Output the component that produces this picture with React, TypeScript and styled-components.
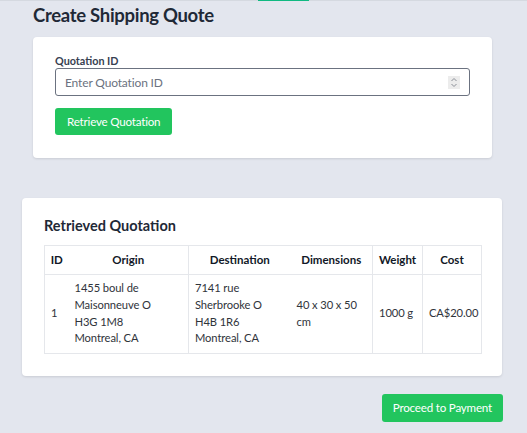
import React from "react";
import { createGlobalStyle, styled } from "styled-components";

const GlobalStyle = createGlobalStyle`
  body {
    margin: 0;
    background: #e3e6ee;
    font-family: Lato, "Liberation Sans", Arial, sans-serif;
    color: #1f2937;
  }
`;

type Quote = {
  id: number;
  origin: string[];
  destination: string[];
  dimensions: string;
  weight: string;
  cost: string;
};

const quote: Quote = {
  id: 1,
  origin: ["1455 boul de", "Maisonneuve O", "H3G 1M8", "Montreal, CA"],
  destination: ["7141 rue", "Sherbrooke O", "H4B 1R6", "Montreal, CA"],
  dimensions: "40 x 30 x 50 cm",
  weight: "1000 g",
  cost: "CA$20.00",
};

const columns = [
  { label: "ID", width: 24, divider: false },
  { label: "Origin", width: 120, divider: false },
  { label: "Destination", width: 102, divider: true },
  { label: "Dimensions", width: 82, divider: false },
  { label: "Weight", width: 50, divider: true },
  { label: "Cost", width: 59, divider: true },
];

export default function App() {
  return (
    <>
      <GlobalStyle />
      <TopStrip>
        <TopAccent />
      </TopStrip>
      <Page>
        <UpperSection>
          <Title>Create Shipping Quote</Title>
          <Card $padding="16px 22px 23px">
            <Label htmlFor="quotation-id">Quotation ID</Label>
            <InputWrapper>
              <Input id="quotation-id" type="text" placeholder="Enter Quotation ID" />
              <Spinner>
                <svg width="8" height="11" viewBox="0 0 8 11" fill="none">
                  <path d="M1.5 4L4 1.5L6.5 4" stroke="#8b8f97" strokeWidth="1" />
                  <path d="M1.5 7L4 9.5L6.5 7" stroke="#8b8f97" strokeWidth="1" />
                </svg>
              </Spinner>
            </InputWrapper>
            <GreenButton>Retrieve Quotation</GreenButton>
          </Card>
        </UpperSection>

        <Card $padding="18px 22px 22px" $wide>
          <SubTitle>Retrieved Quotation</SubTitle>
          <Table>
            <colgroup>
              {columns.map((c) => (
                <col key={c.label} style={{ width: c.width }} />
              ))}
            </colgroup>
            <thead>
              <tr>
                {columns.map((c) => (
                  <Th key={c.label} $divider={c.divider}>
                    {c.label}
                  </Th>
                ))}
              </tr>
            </thead>
            <tbody>
              <tr>
                <Td>{quote.id}</Td>
                <Td>
                  {quote.origin.map((l) => (
                    <div key={l}>{l}</div>
                  ))}
                </Td>
                <Td $divider>
                  {quote.destination.map((l) => (
                    <div key={l}>{l}</div>
                  ))}
                </Td>
                <Td>{quote.dimensions}</Td>
                <Td $divider>{quote.weight}</Td>
                <Td $divider>{quote.cost}</Td>
              </tr>
            </tbody>
          </Table>
        </Card>

        <Footer>
          <GreenButton $large>Proceed to Payment</GreenButton>
        </Footer>
      </Page>
    </>
  );
}

const TopStrip = styled.div`
  height: 1px;
  background: #d5d9e0;
  display: flex;
`;

const TopAccent = styled.div`
  margin-left: 258px;
  width: 51px;
  background: #10b981;
`;

const Page = styled.div`
  display: flex;
  flex-direction: column;
  padding: 0 24px 12px 22px;
`;

const UpperSection = styled.div`
  display: flex;
  flex-direction: column;
  margin: 0 11px 40px;
`;

const Title = styled.h1`
  margin: 0 0 8px;
  font-size: 18.5px;
  line-height: 28px;
  font-weight: 700;
  letter-spacing: -0.3px;
  color: #1f2937;
`;

const Card = styled.div<{ $padding: string; $wide?: boolean }>`
  display: flex;
  flex-direction: column;
  align-items: flex-start;
  background: #ffffff;
  border-radius: 4px;
  box-shadow: 0 1px 3px rgba(0, 0, 0, 0.08), 0 1px 2px rgba(0, 0, 0, 0.04);
  padding: ${(p) => p.$padding};
  margin-right: ${(p) => (p.$wide ? "1px" : "0")};
`;

const Label = styled.label`
  font-size: 10.8px;
  line-height: 15px;
  font-weight: 700;
  color: #374151;
`;

const InputWrapper = styled.div`
  position: relative;
  align-self: stretch;
  margin-bottom: 12px;
`;

const Input = styled.input`
  box-sizing: border-box;
  width: 100%;
  height: 28px;
  border: 1px solid #6b7280;
  border-radius: 3px;
  padding: 0 30px 0 9px;
  font-family: inherit;
  font-size: 12px;
  letter-spacing: -0.15px;
  color: #1f2937;
  outline: none;

  &::placeholder {
    color: #6b7280;
  }
`;

const Spinner = styled.div`
  position: absolute;
  right: 10px;
  top: 8px;
  width: 12px;
  height: 13px;
  background: #ececec;
  display: flex;
  align-items: center;
  justify-content: center;
`;

const GreenButton = styled.button<{ $large?: boolean }>`
  background: #22c55e;
  color: #ffffff;
  border: none;
  border-radius: 3px;
  height: ${(p) => (p.$large ? "28px" : "27px")};
  padding: 0 ${(p) => (p.$large ? "11px" : "12px")};
  font-family: inherit;
  font-size: 11.6px;
  letter-spacing: -0.2px;
  cursor: pointer;
`;

const SubTitle = styled.h2`
  margin: 0 0 9px;
  font-size: 14.5px;
  line-height: 20px;
  font-weight: 700;
  color: #1f2937;
`;

const Table = styled.table`
  table-layout: fixed;
  width: 437px;
  border-collapse: collapse;
  border: 1px solid #e5e7eb;
  font-size: 11.5px;
  line-height: 16.7px;
`;

const Th = styled.th<{ $divider?: boolean }>`
  padding: 5.5px 4px;
  font-weight: 700;
  text-align: center;
  color: #111827;
  border-bottom: 1px solid #e5e7eb;
  border-left: ${(p) => (p.$divider ? "1px solid #e5e7eb" : "none")};
  white-space: nowrap;
`;

const Td = styled.td<{ $divider?: boolean }>`
  padding: 5.5px 6px;
  font-size: 11.2px;
  letter-spacing: -0.1px;
  color: #30343b;
  vertical-align: middle;
  border-left: ${(p) => (p.$divider ? "1px solid #e5e7eb" : "none")};
`;

const Footer = styled.div`
  display: flex;
  justify-content: flex-end;
  margin-top: 18px;
`;
